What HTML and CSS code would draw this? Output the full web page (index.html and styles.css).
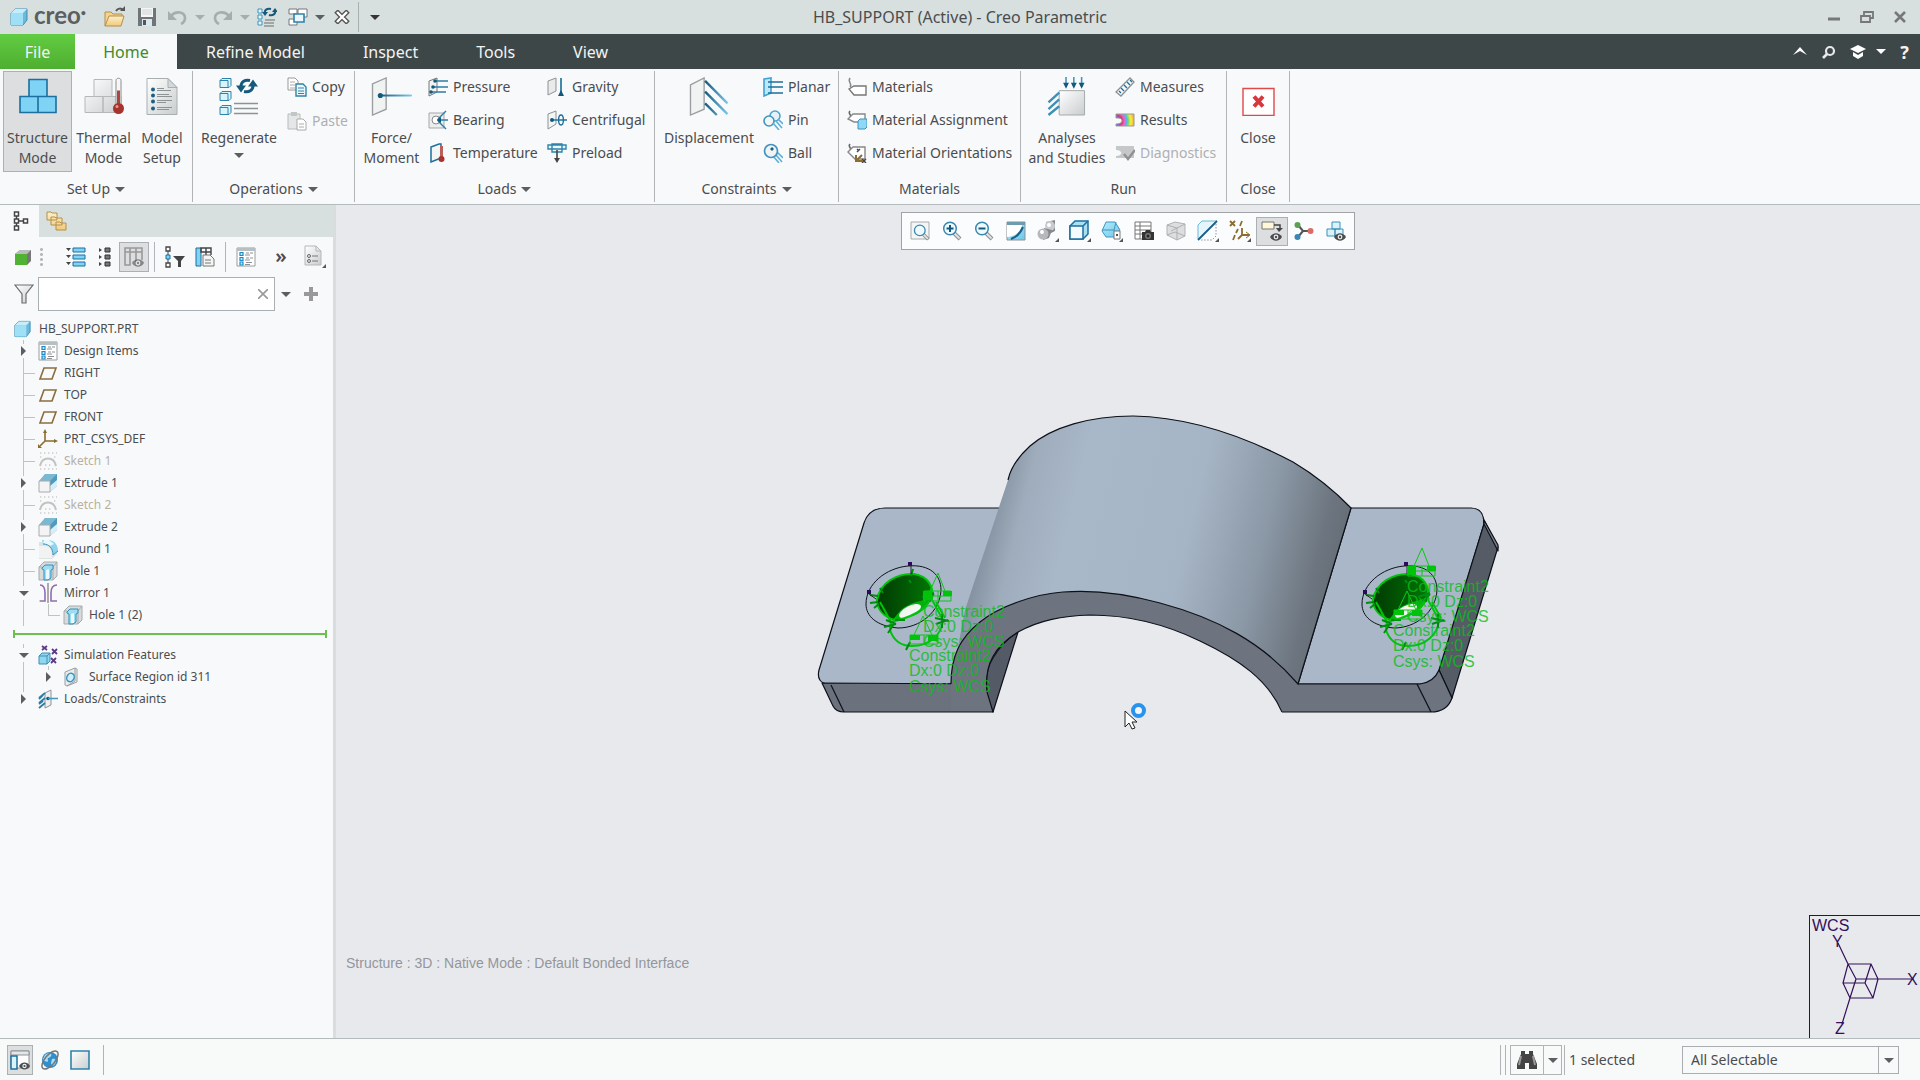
FILE: index.html
```html
<!DOCTYPE html>
<html lang="en">
<head>
<meta charset="utf-8">
<title>HB_SUPPORT (Active) - Creo Parametric</title>
<link rel="stylesheet" href="styles.css">
</head>
<body>
<svg class="defs" aria-hidden="true">
  <defs>
    <linearGradient id="gBlue" x1="0" y1="0" x2="1" y2="1"><stop offset="0" stop-color="#b5ecfb"/><stop offset="1" stop-color="#6fc7ea"/></linearGradient>
    <linearGradient id="gGrey" x1="0" y1="0" x2="1" y2="1"><stop offset="0" stop-color="#fff"/><stop offset="1" stop-color="#c9cdce"/></linearGradient>
    <linearGradient id="gRay"><stop offset="0" stop-color="#125a7c"/><stop offset="1" stop-color="#7cc8ea"/></linearGradient>
    <linearGradient id="gFold" x1="0" y1="0" x2="0" y2="1"><stop offset="0" stop-color="#fdf0c8"/><stop offset="1" stop-color="#f0ca7c"/></linearGradient>
    <radialGradient id="gRain" gradientUnits="userSpaceOnUse" cx="1" cy="8" r="18"><stop offset=".2" stop-color="#5b6cf0"/><stop offset=".35" stop-color="#e03a6a"/><stop offset=".48" stop-color="#e86ad0"/><stop offset=".6" stop-color="#53b4f0"/><stop offset=".7" stop-color="#7be06a"/><stop offset=".82" stop-color="#f8ee3c"/><stop offset="1" stop-color="#f6b13a"/></radialGradient>
    <symbol id="cube" viewBox="0 0 20 20"><path d="M2 6l4-4h12v11l-4 5H2z" fill="#6cb9da" stroke="#3f8fb5"/><path d="M2 6l4-4h12l-4 4z" fill="#c4eefa"/><path d="M2 6h12v12H2z" fill="#9fe0f7"/></symbol>
    <symbol id="plane" viewBox="0 0 20 20"><path d="M6 5h12l-4 11H2z" fill="none" stroke="#8a6d3f" stroke-width="1.6"/></symbol>
    <symbol id="csys" viewBox="0 0 20 20"><path d="M7 2v10h11M7 12l-5 5" fill="none" stroke="#8a6d2f" stroke-width="1.6"/><path d="M5 4l2-4 2 4zM16 10l4 2-4 2zM0 15v4h4z" fill="#8a6d2f"/></symbol>
    <symbol id="sketch" viewBox="0 0 20 20"><path d="M2 15c2-10 14-10 16 0" fill="none" stroke="#c3c3bf" stroke-width="2"/><path d="M2 2h17M2 6h3M16 6h3M7 14h7M2 18h17" stroke="#ccc" stroke-width="1.4" stroke-dasharray="1.4 2.6"/></symbol>
    <symbol id="extrude" viewBox="0 0 20 20"><path d="M1 8l6-7h12v12l-7 6H1z" fill="#9fa6a9"/><path d="M2 8l5-7h12l-7 7z" fill="#7ab9d3"/><path d="M12 8l7-7v7l-7 7z" fill="#4e9bc0"/><path d="M12 13l7-6v6l-7 6z" fill="#d4eff9"/><path d="M1 8h11v11H1z" fill="#f4f4f4" stroke="#aaa"/></symbol>
    <symbol id="round" viewBox="0 0 20 20"><path d="M1 3h8c6 1 10 5 10 11v1l-5 5H1z" fill="#dfe2e3"/><path d="M1 7h5c6 0 8 4 8 12H1z" fill="#f1f2f2"/><path d="M4 1h7c6 1 9 5 9 11l-5 4C15 9 11 5 5 5z" fill="#8fd4ef"/><path d="M6 1h5l5 4-4 2-7-3z" fill="#e7f8fd"/><path d="M20 12l-5 4C15 9 11 5 5 5" fill="none" stroke="#3f95c0"/></symbol>
    <symbol id="hole" viewBox="0 0 20 20"><path d="M1 6l5-5h13v14l-4 4H1z" fill="#d8dbdc" stroke="#a8acad"/><path d="M15 6l4-5M15 6v13M1 6h3" stroke="#a8acad" fill="none"/><path d="M4 7l3-3h8v4l-2 1v8l-3 2H6V9L4 8z" fill="#9edcf2" stroke="#2f8fba"/><path d="M8 9l3-1v10H8z" fill="#e8f9ff"/></symbol>
    <symbol id="mirror" viewBox="0 0 20 20"><path d="M10 0v20" stroke="#8a8a8a" stroke-width="1.4"/><path d="M2 2c4 0 5 4 5 8v8H1.600" fill="none" stroke="#8f6db0" stroke-width="1.6"/><path d="M19 2c-5 0-6 4-6 8v8h6" fill="none" stroke="#8f6db0" stroke-width="1.6"/></symbol>
    <symbol id="design" viewBox="0 0 20 20"><path d="M1 1h18v18H1z" fill="#fff" stroke="#989da0"/><path d="M1 1h18v3H1z" fill="#b7bfc2"/><path d="M4 5.500h3v3H4zM4 10.500h3v3H4zM4 15h3v3H4z" fill="#bfe8fa" stroke="#1d8ac4" stroke-width="1.2"/><path d="M10 6h3M14 6h3M9 8h5M10 11h3M14 11h3M9 13h5M10 15.500h6M9 17.500h5" stroke="#8b9093"/></symbol>
    <symbol id="simfeat" viewBox="0 0 20 20"><path d="M1 11l3-3h8v8l-3 3H1z" fill="#8fd6f2" stroke="#3f8fb5"/><path d="M9 11v8M1 11h8l3-3" stroke="#3f8fb5" fill="none"/><path d="M4 1l5 4M9 1L4 5M14 4l5 5M19 4l-5 5M13 13l5 5M18 13l-5 5" stroke="#5b3a86" stroke-width="1.8"/></symbol>
    <symbol id="region" viewBox="0 0 20 20"><path d="M2 5l10-4 2 1v13L4 19l-2-1z" fill="#e9ebec" stroke="#9aa0a2"/><path d="M12 1v13L4 19" fill="none" stroke="#9aa0a2"/><ellipse cx="7.500" cy="10.500" rx="3.600" ry="4.400" transform="rotate(25 7.500 10.500)" fill="#cdeefa" stroke="#2f8fba" stroke-width="1.400"/></symbol>
    <symbol id="loads" viewBox="0 0 20 20"><path d="M7 4l6-3v15l-6 3z" fill="#f0f0f0" stroke="#8d9294"/><path d="M7 4L1 9M7 9l-6 5M7 14l-6 5M5 6l-4 4M5 12l-4 3" stroke="#2c7da5" stroke-width="1.800"/><circle cx="10" cy="9.500" r="1.800" fill="#125a7c"/><path d="M10 9.500h10" stroke="#3f95c0" stroke-width="1.500"/></symbol>
    <symbol id="lens" viewBox="0 0 20 20"><path d="M12 12l6 6" stroke="#8a8f92" stroke-width="4"/><path d="M12.500 12.500l5 5" stroke="#e2e4e5" stroke-width="2"/><circle cx="8" cy="7.500" r="6.300" fill="#effaff" stroke="#3a87ad" stroke-width="1.500"/></symbol>
    <symbol id="eye" viewBox="0 0 12 8"><path d="M0 4c3-5 9-5 12 0-3 5-9 5-12 0z" fill="#4a4d4f"/><circle cx="6" cy="4" r="2.400" fill="#eee"/><circle cx="6" cy="4" r="1.200" fill="#4a4d4f"/></symbol>
    <symbol id="corner" viewBox="0 0 4 4"><path d="M4 0v4H0z" fill="#555"/></symbol>
  </defs>
</svg>

<div class="app">
  <header class="titlebar">
    <div class="brand"><svg width="20" height="20"><use href="#cube"/></svg><span>creo<sup>•</sup></span></div>
    <div class="quick">
      <button aria-label="Open"><svg width="22" height="22" viewBox="0 0 22 22"><path d="M1 20V6h6l2 2h9v3" fill="#f4d48c" stroke="#b58f4a"/><path d="M1 20l4-10h15l-3 10z" fill="url(#gFold)" stroke="#b58f4a"/><path d="M12 5c2-3 5-3 7-1" fill="none" stroke="#555" stroke-width="2"/><path d="M16 5h5V0z" fill="#555"/></svg></button>
      <button aria-label="Save"><svg width="20" height="20" viewBox="0 0 20 20"><path d="M1 1h18v18H1z" fill="#6f7578"/><path d="M4 1h12v9H4z" fill="#f5f7f7"/><path d="M5 12h10v7H5z" fill="#d6e8f0"/><path d="M6 13h3v5H6z" fill="#555"/><path d="M5 3h10M5 5h10M5 7h10" stroke="#cfd3d4"/></svg></button>
      <button class="step" aria-label="Undo"><svg width="20" height="16" viewBox="0 0 20 16"><path d="M3 7c5-6 14-4 14 2 0 3-2 5-4 6" fill="none" stroke="#a7adae" stroke-width="2.600"/><path d="M0 2v9h9z" fill="#a7adae"/></svg></button>
      <button class="drop pale" aria-label="Undo list"></button>
      <button aria-label="Redo"><svg width="20" height="16" viewBox="0 0 20 16"><path d="M17 7C12 1 3 3 3 9c0 3 2 5 4 6" fill="none" stroke="#a7adae" stroke-width="2.600"/><path d="M20 2v9h-9z" fill="#a7adae"/></svg></button>
      <button class="drop pale" aria-label="Redo list"></button>
      <button aria-label="Regenerate"><svg width="20" height="20" viewBox="0 0 20 20"><path d="M1 2h4v4H1zM1 8h4v4H1zM1 14h4v4H1z" fill="#e6f7fd" stroke="#3a93bd"/><path d="M8 7c-1-4 2-6 6-5M18 3c1 4-2 6-6 5" fill="none" stroke="#17597a" stroke-width="2"/><path d="M5 5h6L8 9zM15 5h6l-3-4z" fill="#17597a"/><path d="M8 13h10M7 16h10M7 19h10" stroke="#8d9294" stroke-width="1.400"/></svg></button>
      <button class="step" aria-label="Windows"><svg width="20" height="20" viewBox="0 0 20 20"><path d="M1 2h8v5H1zM10 2h9v8h-9zM1 12h8v6H1z" fill="#fff" stroke="#777"/><path d="M6 7h10v8H6z" fill="#eaf7fd" stroke="#2f83ab" stroke-width="1.600"/></svg></button>
      <button class="drop" aria-label="Window list"></button>
      <button aria-label="Close window"><svg width="16" height="14" viewBox="0 0 16 14"><path d="M2 1l12 12M14 1L2 13" stroke="#555" stroke-width="5"/><path d="M3 2l10 10M13 2L3 12" stroke="#fff" stroke-width="2.400"/></svg></button>
      <button class="drop more" aria-label="Customize toolbar"></button>
    </div>
    <h1>HB_SUPPORT (Active) - Creo Parametric</h1>
    <div class="winctl">
      <button aria-label="Minimize"><svg width="12" height="12"><path d="M0 8h12" stroke="#777" stroke-width="3"/></svg></button>
      <button aria-label="Restore"><svg width="14" height="12" viewBox="0 0 14 12"><path d="M4 4V1h9v6h-3M1 5h9v6H1z" fill="none" stroke="#777" stroke-width="1.800"/></svg></button>
      <button aria-label="Close"><svg width="12" height="12"><path d="M1 1l10 10M11 1L1 11" stroke="#777" stroke-width="2.600"/></svg></button>
    </div>
  </header>

  <nav class="tabs">
    <button class="file">File</button>
    <button class="active">Home</button>
    <button>Refine Model</button>
    <button>Inspect</button>
    <button>Tools</button>
    <button>View</button>
    <div class="tabtools">
      <button aria-label="Collapse ribbon"><svg width="14" height="10"><path d="M0 8l7-8 7 8-7-4z" fill="#fff"/></svg></button>
      <button aria-label="Search"><svg width="14" height="14"><circle cx="8" cy="6" r="4" fill="none" stroke="#e8eaea" stroke-width="2.200"/><path d="M5 9l-4 4" stroke="#e8eaea" stroke-width="2.600"/></svg></button>
      <button aria-label="Learning"><svg width="16" height="14"><path d="M0 4l8-4 8 4-8 4z" fill="#fff"/><path d="M3 7l5 3 5-3v4l-5 3-5-3z" fill="#fff"/></svg></button>
      <button class="drop white" aria-label="Learning list"></button>
      <button class="help" aria-label="Help">?</button>
    </div>
  </nav>

  <section class="ribbon">
    <div class="group g-setup">
      <div class="tools">
        <button class="big on"><svg width="38" height="38" viewBox="0 0 38 38"><g fill="#7fd3f5" stroke="#1c6f9e" stroke-width="1.600"><path d="M10 2h18v17H10zM1 19h18v16H1zM19 19h18v16H19z"/></g></svg><span>Structure<br>Mode</span></button>
        <button class="big w63"><svg width="40" height="38" viewBox="0 0 40 38"><g fill="url(#gGrey)" stroke="#b4b8ba"><path d="M10 2h18v17H10zM1 19h18v16H1zM19 19h18v16H19z"/></g><path d="M32 28V3c0-3 5-3 5 0v25" fill="#f7f7f7" stroke="#8d8d8d"/><path d="M33 13h3v15h-3z" fill="#b0433c"/><circle cx="34.500" cy="31" r="5.500" fill="#a8322c"/><circle cx="33" cy="29" r="1.500" fill="#e59a94"/></svg><span>Thermal<br>Mode</span></button>
        <button class="big w54"><svg width="32" height="38" viewBox="0 0 32 38"><path d="M1 1h21l9 9v27H1z" fill="url(#gGrey)" stroke="#a9afb1"/><path d="M22 1v9h9z" fill="#d4d8da" stroke="#a9afb1"/><path d="M11 11h7M11 17h12M11 23h15M11 30h15M11 13h14M11 19h15M11 25h9M11 32h12" stroke="#8d9294"/><g fill="#1c5f84"><circle cx="7" cy="12" r="2"/><circle cx="7" cy="18" r="2"/><circle cx="7" cy="24" r="2"/><circle cx="7" cy="31" r="2"/></g></svg><span>Model<br>Setup</span></button>
      </div>
      <button class="caption">Set Up<i></i></button>
    </div>
    <div class="group g-ops">
      <div class="tools">
        <button class="big w84"><svg width="40" height="38" viewBox="0 0 40 38"><g fill="#d9f3fc" stroke="#2f83ab"><path d="M1 3l2-2h9v7l-2 2H1zM1 16l2-2h9v7l-2 2H1zM1 30l2-2h9v7l-2 2H1z"/><path d="M1 3h8v7M1 16h8v7M1 30h8v7" fill="none"/></g><path d="M22 9c0-5 4-7 9-6M34 8c0 5-4 7-9 6" fill="none" stroke="#17597a" stroke-width="3"/><path d="M17 8h10l-5 7zM29 9h10l-5-7z" fill="#17597a"/><path d="M15 26h24M15 31h24M15 36h24" stroke="#8d9294" stroke-width="1.600"/></svg><span>Regenerate<i></i></span></button>
        <div class="smalls wide">
          <button><svg width="20" height="20" viewBox="0 0 20 20"><path d="M1 1h7l3 3v9H1z" fill="#fff" stroke="#999"/><path d="M3 5h5M3 8h5M3 11h5" stroke="#aaa"/><path d="M9 7h7l3 3v9H9z" fill="#eaf8fe" stroke="#2f83ab" stroke-width="1.400"/><path d="M11 11h6M11 14h6M11 16.500h6" stroke="#2f83ab"/></svg>Copy</button>
          <button disabled><svg width="20" height="20" viewBox="0 0 20 20"><path d="M1 3h12v15H1z" fill="#e5e6e7" stroke="#b9bcbd"/><path d="M4 1h6v4H4z" fill="#c3c6c7"/><path d="M10 8h6l3 3v8h-9z" fill="#fff" stroke="#aaa"/><path d="M12 13h5M12 16h5" stroke="#aaa"/></svg>Paste</button>
        </div>
      </div>
      <button class="caption">Operations<i></i></button>
    </div>
    <div class="group g-loads">
      <div class="tools">
        <button class="big w68"><svg width="42" height="40" viewBox="0 0 42 40"><path d="M1 7l14-6v32L1 39z" fill="#f1f2f2" stroke="#9b9fa1" stroke-width="1.400"/><path d="M8 18.500h33v1H8z" fill="url(#gRay)" stroke="url(#gRay)"/><circle cx="9" cy="19" r="2.600" fill="#125a7c"/></svg><span>Force/<br>Moment</span></button>
        <div class="smalls w119">
          <button><svg width="20" height="20" viewBox="0 0 20 20"><path d="M1 4l8-3v14l-8 4z" fill="#f1f2f2" stroke="#777"/><path d="M7 4h13M5 10h15M3 15h15" stroke="#2c7da5" stroke-width="1.600"/><g fill="#125a7c"><circle cx="7" cy="4" r="1.800"/><circle cx="5" cy="10" r="1.800"/><circle cx="3" cy="15" r="1.800"/></g></svg>Pressure</button>
          <button><svg width="20" height="20" viewBox="0 0 20 20"><path d="M1 3h15v15H1z" fill="#eceded" stroke="#a5a9ab"/><circle cx="8" cy="10" r="4" fill="#fff" stroke="#888"/><path d="M20 10H9M18 1l-8 8M18 19l-8-8" stroke="#2c7da5" stroke-width="1.400"/><path d="M9 10l4-3v6z" fill="#125a7c"/></svg>Bearing</button>
          <button><svg width="20" height="20" viewBox="0 0 20 20"><path d="M3 4l8-3h2v14l-10 4z" fill="#f4f5f5" stroke="#1c6f9e" stroke-width="1.500"/><path d="M12 3h3v12h-3z" fill="#b9605a"/><circle cx="13.500" cy="16" r="3" fill="#a8322c"/></svg>Temperature</button>
        </div>
        <div class="smalls">
          <button><svg width="20" height="20" viewBox="0 0 20 20"><path d="M1 4l8-3v13l-8 4z" fill="#e9eaea" stroke="#8d9294"/><path d="M14 1v17" stroke="#2c7da5" stroke-width="1.800"/><path d="M11 19h6l-3-6z" fill="#125a7c"/></svg>Gravity</button>
          <button><svg width="20" height="20" viewBox="0 0 20 20"><path d="M1 4l8-3v13l-8 5z" fill="#f4f5f5" stroke="#8d9294"/><path d="M4 10h16" stroke="#2c7da5" stroke-width="1.600"/><circle cx="5" cy="10" r="2" fill="#125a7c"/><ellipse cx="14" cy="10" rx="2.400" ry="5" fill="none" stroke="#1c6f9e" stroke-width="1.400"/></svg>Centrifugal</button>
          <button><svg width="20" height="20" viewBox="0 0 20 20"><path d="M1 2h18v4H1zM5 1h10v8H5z" fill="#eaf8fe" stroke="#2f83ab" stroke-width="1.400"/><path d="M10 7v10" stroke="#444" stroke-width="1.600"/><path d="M7 15h6l-3 5z" fill="#444"/></svg>Preload</button>
        </div>
      </div>
      <button class="caption">Loads<i></i></button>
    </div>
    <div class="group g-cons">
      <div class="tools">
        <button class="big w98"><svg width="40" height="40" viewBox="0 0 40 40"><path d="M1 8l14-7v32L1 39z" fill="#f1f2f2" stroke="#9b9fa1" stroke-width="1.400"/><path d="M16 4l23 23M16 15l23 23M16 27l12 12" stroke="url(#gRay)" stroke-width="2.400"/></svg><span>Displacement</span></button>
        <div class="smalls">
          <button><svg width="20" height="20" viewBox="0 0 20 20"><path d="M1 2l7-1v15l-7 3z" fill="#bfe6f7" stroke="#3fa3d4" stroke-width="1.600"/><path d="M5 5h15M5 10h15M5 16h15" stroke="#1c6f9e" stroke-width="1.500"/></svg>Planar</button>
          <button><svg width="20" height="20" viewBox="0 0 20 20"><circle cx="12" cy="6" r="5" fill="#e8f2f6" stroke="#4fa5cf" stroke-width="1.600"/><circle cx="6" cy="11" r="5" fill="#f4f5f5" stroke="#3f95c0" stroke-width="1.600"/><path d="M10 13l6 7M13 11l6 7M15 9l5 5" stroke="#5fb0d6" stroke-width="1.600"/></svg>Pin</button>
          <button><svg width="20" height="20" viewBox="0 0 20 20"><path d="M10 13l6 7M13 12l6 7M14 9l6 6" stroke="#5fb0d6" stroke-width="1.600"/><circle cx="8" cy="8" r="6.500" fill="#f0f2f3" stroke="#3f95c0" stroke-width="1.700"/><path d="M9 4l2 2-2 2-2-2z" fill="#1c5f84"/></svg>Ball</button>
        </div>
      </div>
      <button class="caption">Constraints<i></i></button>
    </div>
    <div class="group g-mat">
      <div class="tools">
        <div class="smalls wide">
          <button><svg width="20" height="20" viewBox="0 0 20 20"><path d="M3 1c-3 4 3 6 0 9" fill="none" stroke="#888" stroke-width="1.500"/><path d="M2 12l5-3h12v9H7z" fill="#fff" stroke="#777" stroke-width="1.400"/></svg>Materials</button>
          <button><svg width="20" height="20" viewBox="0 0 20 20"><path d="M3 1c-3 3 3 4 0 7" fill="none" stroke="#666" stroke-width="1.500"/><path d="M1 9l5-5h12v8H7z" fill="#fff" stroke="#888" stroke-width="1.400"/><path d="M11 11l2-2h7v8l-2 2h-7z" fill="#8fd9f6" stroke="#3a93bd"/></svg>Material Assignment</button>
          <button><svg width="20" height="20" viewBox="0 0 20 20"><path d="M3 1c-3 3 3 4 0 7" fill="none" stroke="#666" stroke-width="1.500"/><path d="M1 9l5-5h12v12H8z" fill="#fff" stroke="#888" stroke-width="1.400"/><path d="M13 6l-3 3M10 6l2 2M15 16l4 4M19 16l-4 4" stroke="#444" stroke-width="1.400"/><path d="M9 12v6h7M9 18l6-6" stroke="#8a6d2f" stroke-width="2" fill="none"/></svg>Material Orientations</button>
        </div>
      </div>
      <button class="caption">Materials</button>
    </div>
    <div class="group g-run">
      <div class="tools">
        <button class="big w84"><svg width="40" height="40" viewBox="0 0 40 40"><path d="M12 14h26v25H12z" fill="url(#gGrey)" stroke="#a5a9ab"/><path d="M19 0v10M27 0v10M35 0v10" stroke="#3f95c0" stroke-width="1.600"/><path d="M16 6h6l-3 6zM24 6h6l-3 6zM32 6h6l-3 6z" fill="#125a7c"/><path d="M12 16L1 26M12 23L1 33M12 30L1 39" stroke="#3f8fb5" stroke-width="2.400"/></svg><span>Analyses<br>and Studies</span></button>
        <div class="smalls wide">
          <button><svg width="20" height="20" viewBox="0 0 20 20"><path d="M1 15L15 1l4 4L6 19z" fill="#f4f5f5" stroke="#8d9294" stroke-width="1.300"/><path d="M6 11l3 3M9 8l3 3M12 5l3 3M4 14l2 2M15 3l2 2" stroke="#1c6f9e" stroke-width="1.300"/></svg>Measures</button>
          <button><svg width="20" height="14" viewBox="0 0 20 14"><path d="M1 1h18v12H1v-2c8 0 8-7 0-6z" fill="url(#gRain)" stroke="#999"/></svg>Results</button>
          <button disabled><svg width="20" height="16" viewBox="0 0 20 16"><path d="M1 1h18v12H1v-2c7 0 7-6 0-6z" fill="#c5c8c9"/><path d="M9 9l4 5 7-9" fill="none" stroke="#8f9294" stroke-width="2.400"/></svg>Diagnostics</button>
        </div>
      </div>
      <button class="caption">Run</button>
    </div>
    <div class="group g-close">
      <div class="tools">
        <button class="big"><svg width="34" height="38" viewBox="0 0 34 38"><path d="M2 11h31v27H2z" fill="#fff" stroke="#e0484a" stroke-width="1.400"/><path d="M13 19l9 10M22 19l-9 10" stroke="#d8383b" stroke-width="4"/></svg><span>Close</span></button>
      </div>
      <button class="caption">Close</button>
    </div>
  </section>

  <main class="work">
    <aside class="side">
      <div class="sidetabs">
        <button class="active" aria-label="Model tree"><svg width="16" height="20" viewBox="0 0 16 20"><g fill="#fff" stroke="#444" stroke-width="1.500"><path d="M3.500 3v14M3.500 10h8" fill="none"/><path d="M1.500 1h4v4h-4zM1.500 8h4v4h-4zM1.500 15h4v4h-4zM10.500 8h4v4h-4z"/></g></svg></button>
        <button aria-label="Folders"><svg width="22" height="20" viewBox="0 0 22 20"><g fill="url(#gFold)" stroke="#b58f4a"><path d="M1 1h4l1 1h5v7H1zM5 6h4l1 1h6v7H5zM10 11h4l1 1h5v7H10z"/></g></svg></button>
      </div>
      <div class="sidetools">
        <button aria-label="Filter state"><svg width="18" height="18" viewBox="0 0 18 18"><path d="M1 6l5-4h11v11l-4 4z" fill="#777"/><path d="M1 6l5-4h11l-4 4z" fill="#bbb"/><path d="M1 6h12v11H1z" fill="#4fb233"/></svg></button>
        <span class="grip"></span>
        <button aria-label="Expand"><svg width="20" height="22" viewBox="0 0 20 22"><g fill="#7fd3f5" stroke="#1c6f9e"><path d="M7 2h12v4H7zM7 9h12v4H7zM7 16h12v4H7z"/></g><path d="M0 2h5L2.500 5zM0 9h5l-2.500 3zM0 16h5l-2.500 3z" fill="#444"/></svg></button>
        <button class="tight" aria-label="Collapse"><svg width="12" height="22" viewBox="0 0 12 22"><g fill="#777" stroke="#333"><path d="M6 2h5v4H6zM6 9h5v4H6zM6 16h5v4H6z"/></g><path d="M0 2l3 2-3 2zM0 9l3 2-3 2zM0 16l3 2-3 2z" fill="#444"/></svg></button>
        <button class="on" aria-label="Columns"><svg width="20" height="20" viewBox="0 0 20 20"><path d="M1 1h17v4H1zM1 5h5v13H1zM6 1v17M12 1v14M18 5v8" fill="none" stroke="#999" stroke-width="1.600"/><g opacity=".6"><use href="#eye" x="8" y="12" width="12" height="8"/></g></svg></button>
        <span class="vr"></span>
        <button aria-label="Tree filters"><svg width="20" height="22" viewBox="0 0 20 22"><path d="M3 2v18" stroke="#444"/><path d="M1 1h4v4H1zM1 17h4v4H1z" fill="#fff" stroke="#444" stroke-width="1.300"/><path d="M1 9h4v4H1z" fill="#7fd3f5" stroke="#1c6f9e"/><path d="M8 10h12l-4 5v6h-3v-6z" fill="#444"/></svg></button>
        <button aria-label="Tree columns"><svg width="20" height="20" viewBox="0 0 20 20"><path d="M1 1h5v18H1z" fill="#7fd3f5" stroke="#1c6f9e"/><path d="M6 1h10v4H6zM11 1v7M16 5v3" fill="none" stroke="#444" stroke-width="1.400"/><path d="M8 8h7l4 4v7H8z" fill="#f4f5f5" stroke="#777"/><path d="M10 13h6M10 16h6" stroke="#777"/></svg></button>
        <span class="vr"></span>
        <button aria-label="Design items"><svg width="20" height="20"><use href="#design"/></svg></button>
        <button class="chev" aria-label="More">»</button>
        <button class="tight" aria-label="Tree settings"><svg width="22" height="24" viewBox="0 0 22 24"><path d="M1 1h11l5 5v14H1z" fill="url(#gGrey)" stroke="#b4b8ba"/><path d="M12 1v5h5" fill="none" stroke="#b4b8ba"/><circle cx="5" cy="11" r="1.500" fill="none" stroke="#666"/><circle cx="5" cy="16" r="1.500" fill="none" stroke="#666"/><path d="M8 11h6M8 16h6" stroke="#777"/><use href="#corner" x="18" y="19" width="4" height="4"/></svg></button>
      </div>
      <div class="filter">
        <svg width="20" height="20" viewBox="0 0 20 20"><path d="M1 1h18l-7 9v9H8v-9z" fill="url(#gGrey)" stroke="#6a6f71" stroke-width="1.200"/></svg>
        <label class="field"><input type="text" aria-label="Filter tree"><svg width="10" height="10"><path d="M0 0l10 10M10 0L0 10" stroke="#999" stroke-width="1.600"/></svg></label>
        <button class="drop" aria-label="Filter options"></button>
        <button class="add" aria-label="Add filter"><svg width="14" height="14"><path d="M7 0v14M0 7h14" stroke="#999" stroke-width="4"/></svg></button>
      </div>
      <ul class="tree">
        <li class="root"><svg><use href="#cube"/></svg>HB_SUPPORT.PRT</li>
        <li><b class="shut"></b><svg><use href="#design"/></svg>Design Items</li>
        <li><b></b><svg><use href="#plane"/></svg>RIGHT</li>
        <li><b></b><svg><use href="#plane"/></svg>TOP</li>
        <li><b></b><svg><use href="#plane"/></svg>FRONT</li>
        <li><b></b><svg><use href="#csys"/></svg>PRT_CSYS_DEF</li>
        <li class="hidden"><b></b><svg><use href="#sketch"/></svg>Sketch 1</li>
        <li><b class="shut"></b><svg><use href="#extrude"/></svg>Extrude 1</li>
        <li class="hidden"><b></b><svg><use href="#sketch"/></svg>Sketch 2</li>
        <li><b class="shut"></b><svg><use href="#extrude"/></svg>Extrude 2</li>
        <li><b></b><svg><use href="#round"/></svg>Round 1</li>
        <li><b></b><svg><use href="#hole"/></svg>Hole 1</li>
        <li><b class="open"></b><svg><use href="#mirror"/></svg>Mirror 1</li>
        <li><b class="pass"></b><b class="last"></b><svg><use href="#hole"/></svg>Hole 1 (2)</li>
        <li class="insert"><span></span></li>
        <li><b class="open"></b><svg><use href="#simfeat"/></svg>Simulation Features</li>
        <li><b class="pass"></b><b class="shut end"></b><svg><use href="#region"/></svg>Surface Region id 311</li>
        <li><b class="shut end"></b><svg><use href="#loads"/></svg>Loads/Constraints</li>
      </ul>
    </aside>

    <section class="view">
      <svg class="scene" viewBox="336 205 1584 833" preserveAspectRatio="xMidYMid meet">
        <defs>
          <linearGradient id="shell" gradientUnits="userSpaceOnUse" x1="985" y1="540" x2="1330" y2="625"><stop offset="0" stop-color="#8593a3"/><stop offset=".08" stop-color="#9eacbc"/><stop offset=".22" stop-color="#a9b8c9"/><stop offset=".55" stop-color="#a6b5c5"/><stop offset=".76" stop-color="#8b98a6"/><stop offset=".92" stop-color="#6d7680"/><stop offset="1" stop-color="#646b75"/></linearGradient>
          <linearGradient id="bore"><stop offset="0" stop-color="#013a02"/><stop offset=".55" stop-color="#015a04"/><stop offset="1" stop-color="#017a05"/></linearGradient>
          <g id="hole-mark">
            <path d="M866 604C866 584 886 568 908 566C930 564 941 575 941 590C940 612 920 628 898 628C876 626 866 616 866 604z" fill="none" stroke="#10131c"/>
            <path d="M877 600C880 582 898 573 914 574C928 576 934 587 932 598C920 604 904 606 894 620C882 616 877 608 877 600z" fill="url(#bore)" stroke="#00c40a" stroke-width="2"/>
            <path d="M895 620C897 608 914 601 931 599C926 612 912 619 895 620z" fill="#00b20a"/>
            <ellipse cx="910" cy="611" rx="12" ry="5" transform="rotate(-27 910 611)" fill="#f2f7f2"/>
            <path d="M880 602L891 622L890 630C894 642 902 646 912 646C930 646 942 634 943 620L931 598M891 622C908 618 924 612 930 600M936 602L945 618" fill="none" stroke="#00c40a" stroke-width="2"/>
            <g stroke="#008c10" stroke-width="2"><path d="M913 569l-2 7M909 580l2 3M870 595l8 1M870 603l8-1M874 608l5-4M880 588l3 5M886 620l10 4M884 627l12-3M888 633l6-9M895 620h10M936 624l12-4M935 618l14 3M942 614v14M906 650l4-8M922 597l12-4M926 602l8-8M930 590v12"/></g>
            <path d="M908 562h4v4h-4zM867 590h4v4h-4z" fill="#2b0a58"/><path d="M911 566v8M869 594l7 5" stroke="#2b2a30"/>
          </g>
          <g id="labels">
            <g fill="none" stroke="#0bc816"><path d="M930 591L938 573L945 591M924 591h27v10h-27zM938 591v10M924 596h27"/><path d="M914 635L923 616L932 635M910 635h28v9h-28zM924 635v9"/></g>
            <path d="M923 591h9v9h-9zM943 591h9v5h-9zM910 635h10v5h-10zM928 635h10v6h-10z" fill="#00c40a"/>
            <g class="note"><text x="923" y="617">Constraint2</text><text x="923" y="632">Dx:0 Dz:0</text><text x="923" y="647">Csys: WCS</text><text x="909" y="661">Constraint2</text><text x="909" y="676">Dx:0 Dz:0</text><text x="909" y="692">Csys: WCS</text></g>
          </g>
        </defs>
        <g stroke="#0d1018" stroke-width="1.200" stroke-linejoin="round">
          <path d="M885 508H1005L951 684H829C820 684 817 678 819 670L864 523Q869 508 885 508z" fill="#a9b7c8"/>
          <path d="M822 683L833 706Q836 712 844 712H993L987 684z" fill="#6b727d"/>
          <path d="M831 685L844 712" fill="none"/>
          <path d="M1018 632L993 712C984 694 984 672 993 658C1000 646 1008 638 1018 632z" fill="#555b66"/>
          <path d="M1351 508H1471Q1484 508 1484 524L1442 664Q1436 684 1420 684H1298z" fill="#a9b7c8"/>
          <path d="M1484 520L1498 547L1452 698L1439 670L1484 524z" fill="#565c66"/>
          <path d="M1484 520L1498 545V551L1484 524z" fill="#7b828c"/>
          <path d="M1298 684H1420Q1434 682 1439 670L1452 698Q1447 712 1431 712H1282" fill="#6e747f"/>
          <path d="M1417 684L1431 712" fill="none"/>
        </g>
        <path d="M1008 480C1011 466 1019 456 1030 446C1052 427 1090 416 1133 416C1188 417 1240 434 1293 462Q1325 481 1351 508L1298 684C1262 642 1216 618 1160 603C1120 592 1088 590 1063 592C1035 596 1000 606 980 622C960 638 951 656 951 684L965 610z" fill="url(#shell)"/>
        <path d="M951 684C951 656 960 638 980 622C1000 606 1035 594 1063 592C1088 590 1120 592 1160 603C1216 618 1262 642 1298 684L1300 711H1282C1268 680 1240 660 1200 641C1165 624 1130 615 1090 615C1062 616 1040 620 1018 632C995 646 984 664 987 692L993 711H951z" fill="#6e747f"/>
        <path d="M1008 480C1011 466 1019 456 1030 446C1052 427 1090 416 1133 416C1188 417 1240 434 1293 462Q1325 481 1351 508L1298 684C1262 642 1216 618 1160 603C1120 592 1088 590 1063 592C1035 594 1000 606 980 622C960 638 951 656 951 684M1282 712C1268 680 1240 660 1200 641C1165 624 1130 615 1090 615C1062 616 1040 620 1018 632C995 646 984 664 987 692L993 712" fill="none" stroke="#0d1018" stroke-width="1.200"/>
        <use href="#hole-mark"/><use href="#hole-mark" x="496"/>
        <use href="#labels"/><use href="#labels" x="484" y="-25"/>
        <path d="M1125 711v16l4-4 3 6 3-1-3-6h5z" fill="#fff" stroke="#222"/>
        <circle cx="1138.500" cy="710.500" r="5.500" fill="#f3f5f8" stroke="#2793ec" stroke-width="4"/>
      </svg>
      <div class="viewbar">
        <button aria-label="Refit"><svg width="20" height="20" viewBox="0 0 20 20"><path d="M1 1h18v17H1z" fill="#f4f5f5" stroke="#aaa"/><use href="#lens" x="3" y="3" width="17" height="17"/></svg></button>
        <button aria-label="Zoom in"><svg width="20" height="20" viewBox="0 0 20 20"><use href="#lens"/><path d="M8 4v7M4.500 7.500h7" stroke="#125a7c" stroke-width="2"/></svg></button>
        <button aria-label="Zoom out"><svg width="20" height="20" viewBox="0 0 20 20"><use href="#lens"/><path d="M4.500 7.500h7" stroke="#125a7c" stroke-width="2"/></svg></button>
        <button aria-label="Repaint"><svg width="20" height="20" viewBox="0 0 20 20"><path d="M1 1h18v18H1z" fill="url(#gBlue)" stroke="#8d9294"/><path d="M1 4h15c-1 6-5 11-15 12z" fill="#fff"/><path d="M17 6c-3 7-6 10-12 12" stroke="#1c5f84" stroke-width="2" fill="none"/><path d="M1 1h18v3H1z" fill="#6f9cad"/></svg></button>
        <button aria-label="Rendering"><svg width="22" height="22" viewBox="0 0 22 22"><path d="M9 2l9-2v11l-6 3z" fill="#85898b"/><circle cx="13" cy="6" r="5" fill="#c8cbcc"/><circle cx="12" cy="5" r="2" fill="#fff"/><path d="M7 8l8 2-3 8-6 2z" fill="#85898b"/><circle cx="6" cy="14" r="5.500" fill="#b5b9bb"/><circle cx="5" cy="12" r="2" fill="#fff"/><use href="#corner" x="18" y="18" width="4" height="4"/></svg></button>
        <button aria-label="Display style"><svg width="22" height="22" viewBox="0 0 22 22"><path d="M1 6l5-5h13v13l-5 5H1z" fill="#a9e0f4" stroke="#1c6f9e" stroke-width="1.500"/><path d="M1 6h13v13H1zM14 6l5-5" fill="#f4fbfe" stroke="#1c6f9e" stroke-width="1.500"/><use href="#corner" x="18" y="18" width="4" height="4"/></svg></button>
        <button aria-label="Saved orientations"><svg width="22" height="22" viewBox="0 0 22 22"><path d="M1 11l4-9h9l5 8-4 7H5z" fill="url(#gBlue)" stroke="#3f95c0"/><path d="M1 10h12l2-8M13 10l2 7" fill="none" stroke="#3f95c0"/><path d="M13 11h6v8h-6z" fill="#fff" stroke="#777"/><path d="M15 14h2v2h-2z" fill="#555"/><use href="#corner" x="18" y="18" width="4" height="4"/></svg></button>
        <button aria-label="View manager"><svg width="20" height="20" viewBox="0 0 20 20"><path d="M1 1h16v17H1zM1 5h16M1 9h16M1 13h12M6 1v17" fill="#fff" stroke="#777"/><path d="M8 11h3l1-2h4l1 2h3v8H8z" fill="#333"/><circle cx="14" cy="15" r="3" fill="#777"/><circle cx="14" cy="15" r="1.500" fill="#222"/></svg></button>
        <button aria-label="Perspective"><svg width="20" height="20" viewBox="0 0 20 20"><path d="M1 4l8-3 10 2v12l-8 4-10-5z" fill="#dcdedf" stroke="#b0b3b4"/><path d="M1 4l10 3 8-4M11 7v12M5 10l6-3M1 14l8-3 10 4" fill="none" stroke="#adb0b2"/></svg></button>
        <button aria-label="Sections"><svg width="22" height="22" viewBox="0 0 22 22"><path d="M1 19V5l4-4h15z" fill="#e4f5fb" stroke="#6fb9d8"/><path d="M1 20L20 1" stroke="#1c5f84" stroke-width="1.800"/><path d="M19 4v12l-4 4H3" fill="none" stroke="#8d9294" stroke-dasharray="1.500 1.500"/><use href="#corner" x="18" y="18" width="4" height="4"/></svg></button>
        <button aria-label="Datum display"><svg width="22" height="22" viewBox="0 0 22 22"><path d="M1 1l5 5M6 1L1 6M13 1l-2 5M9 9l-2 4M6 15l-2 5M13 8v7h7M13 15l-4 4" stroke="#8a6d2f" stroke-width="1.800" fill="none"/><path d="M17 12l4 3-4 3" stroke="#8a6d2f" fill="none"/><use href="#corner" x="18" y="18" width="4" height="4"/></svg></button>
        <button class="on" aria-label="Annotations"><svg width="22" height="22" viewBox="0 0 22 22"><path d="M1 2h12v7H1z" fill="#fff7d8" stroke="#777"/><path d="M13 5h6v3" fill="none" stroke="#444" stroke-width="1.500"/><path d="M15 8h7l-4 4z" fill="#444"/><use href="#eye" x="9" y="13" width="12" height="8"/></svg></button>
        <button aria-label="Spin center"><svg width="20" height="20" viewBox="0 0 20 20"><path d="M4 4l5 6h8M9 10l-5 6" stroke="#555" stroke-width="2" fill="none"/><circle cx="3.500" cy="4" r="3" fill="#5f9f54"/><circle cx="16.500" cy="10" r="3" fill="#dd6a64"/><circle cx="3.500" cy="16" r="3" fill="#3a86b4"/></svg></button>
        <button aria-label="Simulation display"><svg width="20" height="20" viewBox="0 0 20 20"><g fill="#d9f3fc" stroke="#3f8fb5"><path d="M6 1h8v7H6zM1 8h8v7H1zM9 8h8v7H9z"/></g><use href="#eye" x="8" y="12" width="12" height="8"/></svg></button>
      </div>
      <p class="status3d">Structure : 3D : Native Mode : Default Bonded Interface</p>
      <div class="triad"><svg width="110" height="122" viewBox="0 0 110 122"><text x="2" y="15">WCS</text><g fill="none" stroke="#33105c" stroke-width="1.200"><path d="M38 48H61L68 63L63 82H40L33 67zM38 48L46 63L40 82M61 48L55 67L63 82M33 67H55M46 63H104M28 27L38 48M40 82L32 108"/></g><text x="22" y="31">Y</text><text x="97" y="69">X</text><text x="25" y="118">Z</text></svg></div>
    </section>
  </main>

  <footer class="statusbar">
    <button class="on" aria-label="Navigator"><svg width="20" height="20" viewBox="0 0 20 20"><path d="M1 1h18v17H1z" fill="#fff" stroke="#8d9294"/><path d="M1 1h18v4H1z" fill="#e4e6e7" stroke="#8d9294"/><path d="M1 6h6v13H1z" fill="#d9f3fc" stroke="#1c6f9e" stroke-width="1.500"/><use href="#eye" x="9" y="12" width="11" height="8"/></svg></button>
    <button aria-label="Browser"><svg width="20" height="20" viewBox="0 0 20 20"><circle cx="10" cy="10" r="8" fill="#2f8fcb"/><path d="M5 5c3-3 8-2 6 1s-4 1-3 4-4 2-5-1zM12 9c4-1 5 2 3 5s-4 1-4-1z" fill="#a9dcf5"/><ellipse cx="10" cy="10" rx="11" ry="5" transform="rotate(-50 10 10)" fill="none" stroke="#777" stroke-width="1.500"/></svg></button>
    <button class="full" aria-label="Full screen"><svg width="20" height="20" viewBox="0 0 20 20"><path d="M1 1h18v18H1z" fill="url(#gGrey)" stroke="#2f83ab" stroke-width="1.600"/></svg></button>
    <span class="vr"></span>
    <div class="right">
      <span class="vr"></span><span class="vr"></span>
      <div class="find"><button aria-label="Find"><svg width="20" height="20" viewBox="0 0 20 20"><path d="M4 1h4v3h4V1h4v3l4 10v5h-8v-6H8v6H0v-5L4 4z" fill="#444"/><path d="M4 6l-2 9M16 6l2 9" stroke="#999" stroke-width="2"/></svg></button><button class="drop" aria-label="Find options"></button></div>
      <span class="vr"></span>
      <output>1 selected</output>
      <label class="pick"><select aria-label="Selection filter"><option>All Selectable</option></select><span></span></label>
    </div>
  </footer>
</div>
</body>
</html>
```
FILE: styles.css
```css
* { box-sizing: border-box; }
body { margin: 0; font: 14px/20px "Noto Sans", "Open Sans", sans-serif; color: #4a4d4f; }
button { border: 0; padding: 0; margin: 0; background: none; font: inherit; color: inherit; display: flex; align-items: center; justify-content: center; white-space: nowrap; }
svg { display: block; flex: none; }
.defs { position: absolute; width: 0; height: 0; }
.app { min-height: 100vh; display: flex; flex-direction: column; }

.drop::after, .caption i, .big i { content: ""; border: 5px solid transparent; border-top-color: #5c5f61; border-bottom: 0; }
.drop.pale::after { border-top-color: #a7adae; }
.drop.white::after { border-top-color: #fff; }
.vr { width: 1px; height: 30px; background: #b0b4b6; }
.on { background: #dcdee0; border: 1px solid #adb0b2; }

/* Title bar */
.titlebar { height: 34px; display: grid; grid-template-columns: 1fr auto 1fr; align-items: center; background: #d8dfdf; grid-template-areas: "left title right"; }
.brand { grid-area: left; display: flex; align-items: center; gap: 5px; padding-left: 9px; font: 600 24px/30px "Open Sans", sans-serif; color: #5a5f61; }
.brand span { padding-bottom: 4px; }
.brand sup { font-size: 9px; line-height: 1px; vertical-align: 8px; }
.brand { font-family: "Lato", sans-serif; font-weight: 700; }
.quick { grid-area: left; display: flex; height: 34px; padding-left: 99px; }
.quick button { width: 32px; }
.quick .step { width: 30px; }
.quick .drop { width: 13px; }
.quick .more { width: 32px; border-left: 1px solid #a9b0b1; height: 30px; margin-top: 2px; }
.quick .more::after { border-top-color: #333; }
.titlebar h1 { grid-area: title; margin: 0; font-size: 16px; font-weight: 400; }
.winctl { grid-area: right; display: flex; justify-content: flex-end; padding-right: 4px; }
.winctl button { width: 33px; height: 34px; }

/* Ribbon tabs */
.tabs { height: 35px; display: flex; background: #3e4748; color: #f2f4f4; font-size: 16px; }
.tabs > button { padding: 0 29px; }
.tabs > .file { width: 75px; padding: 0; background: linear-gradient(#61cc42, #4fae30); }
.tabs > .active { width: 102px; padding: 0; background: #f8f9fb; color: #3f8b2a; }
.tabtools { display: flex; margin-left: auto; padding-right: 1px; }
.tabtools button { width: 29px; }
.tabtools .drop { width: 18px; }
.tabtools .help { font-size: 18px; font-weight: 700; }

/* Ribbon */
.ribbon { height: 136px; display: flex; background: #f8f9fb; border-bottom: 1px solid #b5babc; padding: 2px 0; }
.group { display: flex; flex-direction: column; border-right: 1px solid #b0b4b6; padding: 0 3px; flex: none; }
.g-setup { width: 193px; }
.g-ops { width: 162px; }
.g-loads { width: 300px; }
.g-cons { width: 184px; }
.g-mat { width: 182px; }
.g-run { width: 206px; }
.g-close { width: 63px; }
.tools { display: flex; height: 101px; }
.big { flex-direction: column; justify-content: flex-start; gap: 12px; width: 69px; padding-top: 6px; text-align: center; }
.big svg { height: 39px; }
.big.on { padding-top: 5px; }
.big.w54 { width: 54px; }
.big.w63 { width: 63px; }
.big.w68 { width: 67px; }
.big.w84 { width: 86px; }
.big.w98 { width: 102px; }
.g-close .big { width: 56px; }
.big i { display: block; width: 10px; margin: 5px auto 0; }
.smalls { display: flex; flex-direction: column; height: 100px; }
.smalls button { height: 34px; gap: 5px; padding: 0 3px 2px; justify-content: flex-start; }
.smalls.wide button { padding-left: 5px; }
.w119 { width: 119px; }
.smalls button:disabled { color: #adb0b2; }
.caption { margin-top: auto; height: 26px; gap: 5px; }

/* Work area */
.work { flex: 1; display: flex; background: #e8e9ed; }
.side { width: 336px; flex: none; background: #f8f9fb; border-right: 3px solid #dadddf; }
.sidetabs { display: flex; height: 32px; background: #d8dfdf; }
.sidetabs button { width: 36px; }
.sidetabs .active { width: 39px; padding-left: 3px; background: #f8f9fb; }
.sidetools { display: flex; height: 40px; align-items: center; padding-left: 8px; }
.sidetools button { width: 30px; height: 30px; }
.sidetools .tight { width: 28px; }
.sidetools .chev { width: 40px; padding-bottom: 3px; font-size: 20px; font-weight: 600; }
.sidetools .vr { margin: 0 5px; }
.grip { width: 22px; height: 20px; margin-left: 1px; background: radial-gradient(circle, #b5b8ba 1px, transparent 2px) 0 0 / 5px 5px repeat-y; }
.filter { display: flex; align-items: center; height: 34px; padding-left: 14px; }
.field { display: flex; align-items: center; margin-left: 4px; width: 237px; height: 34px; background: #fff; border: 1px solid #a9b0b1; padding-right: 6px; }
.field input { flex: 1; min-width: 0; height: 30px; border: 0; outline: 0; font: inherit; background: none; }
.filter .drop { width: 22px; }
.filter .add { width: 28px; }

.tree { list-style: none; margin: 7px 0 0; padding: 0 0 0 13px; font-size: 12px; line-height: 22px; }
.tree li { display: flex; align-items: center; height: 22px; white-space: pre; }
.tree svg { width: 20px; height: 20px; margin-right: 6px; }
.tree .root svg { width: 19px; margin-right: 7px; }
.tree .hidden { color: #b9b2a0; }
.tree b { width: 25px; height: 22px; display: flex; align-items: center; background: linear-gradient(#c0c3c5, #c0c3c5) 10px 0 / 1px 22px no-repeat, linear-gradient(#c0c3c5, #c0c3c5) 10px 11px / 12px 1px no-repeat; }
.tree .pass { background-size: 1px 22px, 0 0; }
.tree .last { background-size: 1px 11px, 12px 1px; }
.tree .shut, .tree .open { background: linear-gradient(#c0c3c5 4px, transparent 4px 18px, #c0c3c5 18px) 10px 0 / 1px 22px no-repeat; }
.tree .end { background: linear-gradient(#c0c3c5, #c0c3c5) 10px 0 / 1px 4px no-repeat; }
.tree .shut::after { content: ""; margin-left: 8px; border: 5px solid transparent; border-left-color: #5c5f61; border-right: 0; }
.tree .open::after { content: ""; margin-left: 6px; border: 5px solid transparent; border-top-color: #5c5f61; border-bottom: 0; }
.tree .insert { height: 18px; padding: 0 6px 2px 0; }
.insert span { flex: 1; height: 8px; border: 2px solid #6cc04f; border-width: 0 2px; background: linear-gradient(#6cc04f, #6cc04f) 0 3px / 100% 2px no-repeat; }

/* Graphics area */
.view { flex: 1; position: relative; min-width: 0; min-height: 833px; }
.scene { position: absolute; inset: 0; width: 100%; height: 100%; }
.note { font: 16px "Liberation Sans", sans-serif; fill: #0bbd18; opacity: .8; }
.viewbar { position: relative; display: flex; align-items: center; justify-content: center; width: fit-content; height: 38px; margin: 7px auto 0; padding: 0 2px; background: #fbfcfd; border: 1px solid #a0a4a7; }
.viewbar button { width: 32px; height: 29px; }
.status3d { position: absolute; left: 10px; bottom: 65px; margin: 0; font: 14px/20px "Liberation Sans", sans-serif; color: #94969c; }
.triad { position: absolute; right: 0; bottom: 0; border: 1px solid #2a1440; border-width: 1px 0 0 1px; font: 16px "Liberation Sans", sans-serif; fill: #33105c; }

/* Status bar */
.statusbar { height: 42px; display: flex; align-items: center; background: #f8f9f9; border-top: 1px solid #b5babc; padding: 1px 21px 0 7px; }
.statusbar > button { width: 33px; height: 30px; }
.statusbar > .on { width: 26px; }
.statusbar > .full { width: 28px; }
.statusbar > .vr { margin-left: 9px; }
.right { display: flex; align-items: center; gap: 4px; margin-left: auto; }
.find { display: flex; height: 30px; border: 1px solid #b0b4b6; margin-right: -2px; }
.find button { width: 32px; }
.find .drop { width: 18px; border-left: 1px solid #b0b4b6; }
.right output { width: 109px; }
.pick { display: flex; width: 217px; height: 28px; border: 1px solid #a9adaf; position: relative; }
.pick select { appearance: none; flex: 1; border: 0; outline: 0; background: none; padding: 0 8px; font: inherit; color: inherit; }
.pick span { position: absolute; right: 0; top: 0; bottom: 0; width: 20px; border-left: 1px solid #a9adaf; display: flex; align-items: center; justify-content: center; pointer-events: none; }
.pick span::after { content: ""; border: 5px solid transparent; border-top-color: #5c5f61; border-bottom: 0; }
```
